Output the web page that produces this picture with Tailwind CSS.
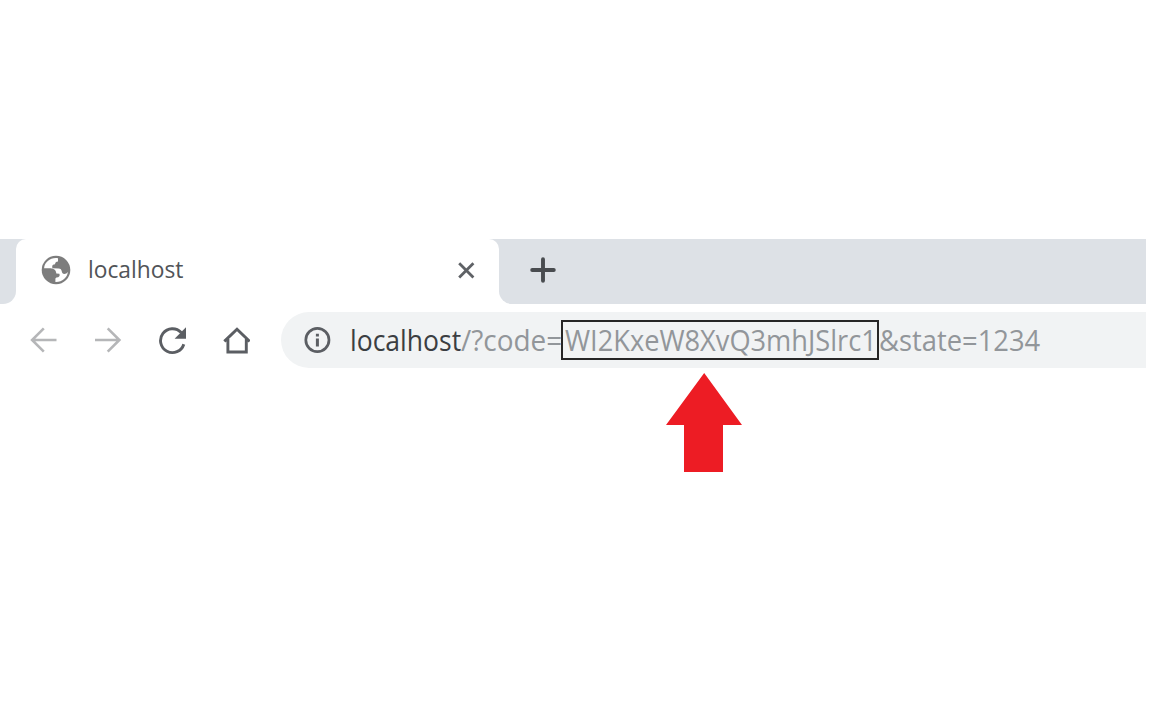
<!DOCTYPE html>
<html lang="en">
<head>
<meta charset="utf-8">
<title>localhost</title>
<script src="https://cdn.jsdelivr.net/npm/@tailwindcss/browser@4"></script>
</head>
<body class="bg-white h-screen overflow-hidden pt-[239px] font-['Open_Sans','Noto_Sans',sans-serif]">
<div class="w-[1146px]">
  <!-- tab strip -->
  <div class="flex h-[65px] bg-white">
    <div class="w-4 bg-white"><div class="h-full w-4 bg-[#dde1e6] rounded-br-[13px]"></div></div>
    <div class="w-[483px] bg-[#dde1e6]">
      <div class="flex h-full items-center bg-white rounded-t-[10px] pl-[25px] pr-[23px] pb-[3px]">
        <svg class="size-[30px] shrink-0" viewBox="0 0 30 30"><circle cx="15" cy="15" r="14.3" fill="#7d7d7d"/><path fill="#fff" d="M17 3.2C10 2 3.6 6.6 3.1 13.2L9.5 13.2C13 13.3 15.3 15.4 15.3 18.6L18.4 18.8C19.2 20.8 18.4 22.4 15.4 22.6L14.4 23.4 14.4 26.9C21 27.2 26.2 22.8 26.9 17L25.3 18.4C22.5 19.6 21.2 18.4 20.8 16.4C20.5 14.6 19.6 13.4 17.6 13.4L11.4 13.2 11.2 11.4C11.3 10 12.4 9.4 14 9.3C14.2 7.4 15 6.6 17 6.4Z"/></svg>
        <span class="ml-[17px] -mt-[2px] w-[96px] whitespace-nowrap text-[23px] leading-8 text-[#515458] origin-left scale-x-[0.99]">localhost</span>
        <svg class="ml-auto size-5" viewBox="0 0 20 20"><path d="M3.2 3.2 17.4 17.4M17.4 3.2 3.2 17.4" stroke="#5f6266" stroke-width="2.8"/></svg>
      </div>
    </div>
    <div class="flex-1 bg-white"><div class="flex h-full items-center bg-[#dde1e6] rounded-bl-[13px] pl-[31px] pb-[3px]">
      <svg class="size-[26px]" viewBox="0 0 26 26"><path d="M13 2.2V23.8M2.2 13H23.8" stroke="#494c50" stroke-width="3.9" stroke-linecap="round"/></svg>
    </div></div>
  </div>
  <!-- toolbar -->
  <div class="mt-2 flex h-14 items-center">
    <div class="flex w-[281px] items-center gap-[34px] pl-[28px]">
      <svg class="size-[30px]" viewBox="0 0 30 30" fill="none" stroke="#b5b6b8" stroke-width="2.6"><path d="M28.5 15H4M15.8 3.3 4.1 15 15.8 26.7"/></svg>
      <svg class="size-[30px]" viewBox="0 0 30 30" fill="none" stroke="#b5b6b8" stroke-width="2.6"><path d="M3 15H27.5M15.7 3.3 27.4 15 15.7 26.7"/></svg>
      <svg class="size-[30px]" viewBox="0 0 30 30"><path d="M25.2 7.6A11.9 11.9 0 1 0 27.8 19.2" fill="none" stroke="#5b5e63" stroke-width="2.9"/><path d="M30 2.3V13.7H18.6Z" fill="#5b5e63"/></svg>
      <svg class="size-[30px]" viewBox="0 0 30 30" fill="none" stroke="#5b5e63" stroke-width="2.9"><path d="M4.3 16.4 17 4.3 29.7 16.4M7.9 14V27H26.3V14"/></svg>
    </div>
    <div class="flex h-full flex-1 items-center rounded-l-full bg-[#f1f3f4] pl-[22px]">
      <svg class="size-7 shrink-0" viewBox="0 0 28 28"><circle cx="14.4" cy="14" r="11.6" fill="none" stroke="#5b5e63" stroke-width="2.7"/><path d="M14.4 12.6V20.5M14.4 7.8V10.6" stroke="#5b5e63" stroke-width="3"/></svg>
      <div class="ml-[19px] flex items-center whitespace-nowrap text-[29px] leading-10 text-[#92969a]">
        <span class="w-[111px] origin-left scale-x-[0.915] text-[#3b3e42]">localhost</span>
        <span class="w-[100px] origin-left scale-x-[0.963]">/?code=</span>
        <span class="box-border h-10 w-[318px] border-2 border-[#262626] pl-[2px]"><span class="-mt-[2px] block w-[310px] origin-left scale-x-[0.938]">WI2KxeW8XvQ3mhJSlrc1</span></span>
        <span class="w-[162px] origin-left scale-x-[0.943]">&amp;state=1234</span>
      </div>
    </div>
  </div>
  <!-- pointer to the code value -->
  <div class="flex pl-[666px] pt-[5px]">
    <svg class="h-[99px] w-[77px]" viewBox="0 0 77 99"><path d="M38.2 0 76 52H57V99H18V52H0Z" fill="#ed1c24"/></svg>
  </div>
</div>
</body>
</html>
